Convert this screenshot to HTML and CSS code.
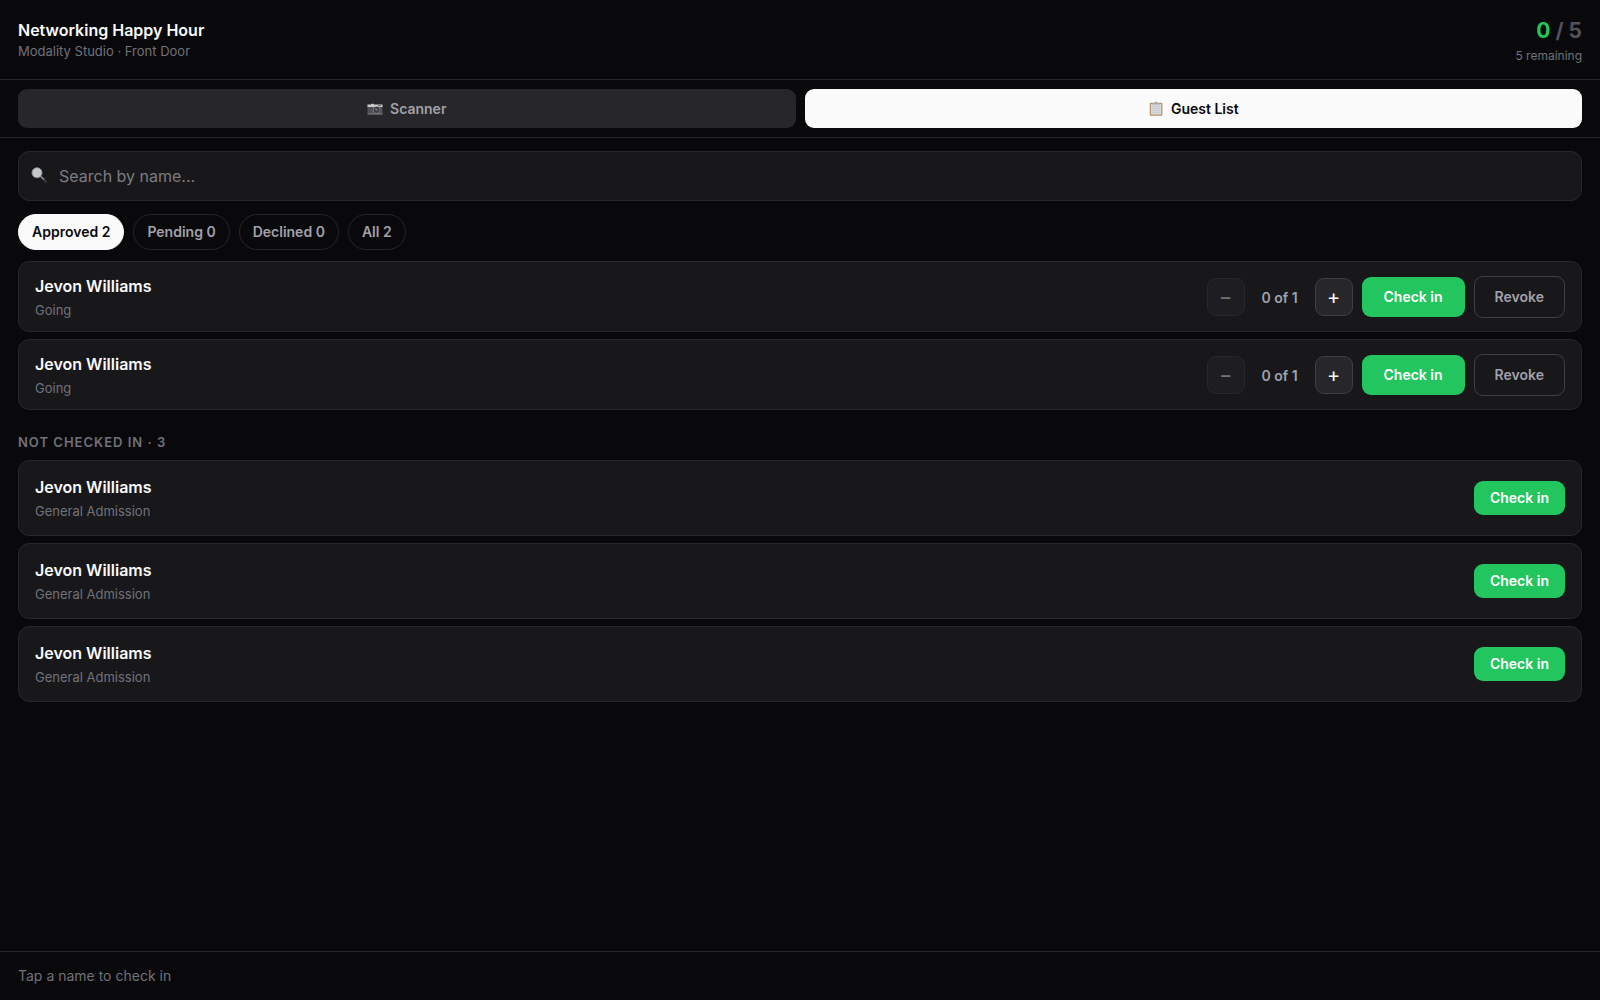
FILE: index.html
```html
<!DOCTYPE html>
<html lang="en">
<head>
    <meta charset="UTF-8">
    <meta name="viewport" content="width=device-width, initial-scale=1.0">
    <title>Networking Happy Hour - Check in</title>
    <link rel="stylesheet" href="styles.css">
</head>
<body>
    <header class="header">
        <div>
            <h1 class="event-name">Networking Happy Hour</h1>
            <p class="event-meta">Modality Studio · Front Door</p>
        </div>
        <div class="counter">
            <div class="count"><span class="count-in">0</span> / 5</div>
            <p class="count-left">5 remaining</p>
        </div>
    </header>

    <nav class="tabs">
        <button type="button" class="tab">
            <svg class="icon" viewBox="0 0 16 16" aria-hidden="true">
                <path d="M.5 4h15v9.4H.5z" fill="#505155"/>
                <path d="M.5 3.5H4l.5-.7h2l.5.7h8.5V6H.5z" fill="#c9c9c5"/>
                <path d="M.5 12.6h15v.8H.5z" fill="#8d8d8f"/>
                <path d="M11 3.6h3v1.5h-3z" fill="#7b786c"/>
                <circle cx="9.7" cy="9" r="3.7" fill="#808287"/>
                <circle cx="9.7" cy="9" r="2.9" fill="#36373c"/>
                <circle cx="9.7" cy="9" r="1.5" fill="#5a5d64"/>
                <circle cx="9" cy="8.2" r=".6" fill="#a5a8ad"/>
            </svg>
            Scanner
        </button>
        <button type="button" class="tab active">
            <svg class="icon" viewBox="0 0 16 16" aria-hidden="true">
                <rect x="1.8" y="1.8" width="12.6" height="13" rx="1" fill="#b58c5c"/>
                <path d="M2.9 2.8h10.4v10.8H2.9z" fill="#d8d9dc"/>
                <path d="M4 5.5h8M4 7.5h8M4 9.5h8M4 11.5h8" stroke="#c6c8cc" stroke-width=".7"/>
                <path d="M4.2 3.6V2.2h2.3a1.6 1.6 0 0 1 3.2 0H12v1.4z" fill="#a9abaf"/>
            </svg>
            Guest List
        </button>
    </nav>

    <main class="content">
        <label class="search">
            <svg class="icon search-icon" viewBox="0 0 16 16" aria-hidden="true">
                <path d="M10 10l5 4.7" stroke="#34373b" stroke-width="2.2" stroke-linecap="round"/>
                <path d="M9.6 9.2l3.6 3.3" stroke="#8997a3" stroke-width="1.2"/>
                <circle cx="6" cy="5.8" r="5" fill="#c6c7c9" stroke="#8b9298" stroke-width=".9"/>
            </svg>
            <input type="text" placeholder="Search by name..." aria-label="Search by name">
        </label>

        <div class="filters">
            <button type="button" class="chip active">Approved 2</button>
            <button type="button" class="chip">Pending 0</button>
            <button type="button" class="chip">Declined 0</button>
            <button type="button" class="chip">All 2</button>
        </div>

        <div class="guests">
            <div class="guest">
                <div class="guest-info">
                    <div class="guest-name">Jevon Williams</div>
                    <div class="guest-note">Going</div>
                </div>
                <div class="actions">
                    <button type="button" class="step" aria-label="Remove one" disabled>−</button>
                    <span class="party">0 of 1</span>
                    <button type="button" class="step" aria-label="Add one">+</button>
                    <button type="button" class="button large">Check in</button>
                    <button type="button" class="button outline">Revoke</button>
                </div>
            </div>
            <div class="guest">
                <div class="guest-info">
                    <div class="guest-name">Jevon Williams</div>
                    <div class="guest-note">Going</div>
                </div>
                <div class="actions">
                    <button type="button" class="step" aria-label="Remove one" disabled>−</button>
                    <span class="party">0 of 1</span>
                    <button type="button" class="step" aria-label="Add one">+</button>
                    <button type="button" class="button large">Check in</button>
                    <button type="button" class="button outline">Revoke</button>
                </div>
            </div>
        </div>

        <h2 class="section-title">Not checked in · 3</h2>

        <div class="guests">
            <div class="guest ticket">
                <div class="guest-info">
                    <div class="guest-name">Jevon Williams</div>
                    <div class="guest-note">General Admission</div>
                </div>
                <button type="button" class="button">Check in</button>
            </div>
            <div class="guest ticket">
                <div class="guest-info">
                    <div class="guest-name">Jevon Williams</div>
                    <div class="guest-note">General Admission</div>
                </div>
                <button type="button" class="button">Check in</button>
            </div>
            <div class="guest ticket">
                <div class="guest-info">
                    <div class="guest-name">Jevon Williams</div>
                    <div class="guest-note">General Admission</div>
                </div>
                <button type="button" class="button">Check in</button>
            </div>
        </div>
    </main>

    <footer class="footer">Tap a name to check in</footer>
</body>
</html>
```

FILE: styles.css
```css
:root {
    --background: #09090b;
    --card: #18181b;
    --border: #27272a;
    --border-strong: #3f3f46;
    --text: #fafafa;
    --soft: #a1a1aa;
    --muted: #71717a;
    --faint: #52525b;
    --green: #22c55e;
}

* {
    margin: 0;
    padding: 0;
    box-sizing: border-box;
}

body {
    min-height: 100vh;
    display: flex;
    flex-direction: column;
    background: var(--background);
    color: var(--text);
    font-family: Inter, sans-serif;
    font-size: 16px;
}

button,
input {
    font-family: inherit;
}

button {
    cursor: pointer;
}

.header {
    display: flex;
    justify-content: space-between;
    align-items: flex-start;
    padding: 18px 18px 14px;
    border-bottom: 1px solid var(--border);
}

.event-name {
    font-size: 16px;
    font-weight: 600;
    line-height: 24px;
}

.event-meta {
    font-size: 13px;
    line-height: 18px;
    color: var(--muted);
}

.counter {
    text-align: right;
}

.count {
    font-size: 21px;
    font-weight: 700;
    line-height: 25px;
    color: var(--faint);
}

.count-in {
    color: var(--green);
}

.count-left {
    margin-top: 4px;
    font-size: 12px;
    line-height: 18px;
    color: var(--muted);
}

.tabs {
    display: flex;
    gap: 9px;
    padding: 9px 18px;
    border-bottom: 1px solid var(--border);
}

.tab {
    flex: 1;
    display: flex;
    justify-content: center;
    align-items: center;
    gap: 7px;
    padding: 10px;
    border: none;
    border-radius: 9px;
    background: var(--border);
    color: var(--soft);
    font-size: 14px;
    font-weight: 600;
    line-height: 19px;
}

.tab.active {
    background: var(--text);
    color: var(--background);
}

.icon {
    width: 16px;
    height: 16px;
    flex: none;
}

.content {
    flex: 1;
    padding: 13px 18px;
}

.search {
    display: flex;
    align-items: center;
    gap: 12px;
    padding: 0 12px;
    background: var(--card);
    border: 1px solid var(--border);
    border-radius: 11px;
}

.search-icon {
    margin-bottom: 3px;
}

.search input {
    flex: 1;
    height: 48px;
    border: none;
    outline: none;
    background: transparent;
    color: var(--text);
    font-size: 16px;
}

.search input::placeholder {
    color: #7c7c80;
}

.filters {
    display: flex;
    gap: 9px;
    margin: 13px 0 11px;
}

.chip {
    padding: 8px 13px;
    border: 1px solid var(--border);
    border-radius: 18px;
    background: transparent;
    color: var(--soft);
    font-size: 14px;
    font-weight: 600;
    line-height: 18px;
}

.chip.active {
    background: var(--text);
    border-color: var(--text);
    color: var(--background);
}

.guests {
    display: flex;
    flex-direction: column;
    gap: 7px;
}

.guest {
    display: flex;
    justify-content: space-between;
    align-items: center;
    padding: 13px 16px 12px;
    background: var(--card);
    border: 1px solid var(--border);
    border-radius: 11px;
}

.ticket {
    padding: 15px 16px;
}

.guest-name {
    font-size: 16px;
    font-weight: 600;
    line-height: 23px;
}

.guest-note {
    margin-top: 3px;
    font-size: 13px;
    line-height: 18px;
    color: var(--muted);
}

.actions {
    display: flex;
    align-items: center;
    gap: 9px;
}

.step {
    width: 38px;
    height: 38px;
    background: var(--border);
    border: 1px solid var(--border-strong);
    border-radius: 9px;
    color: var(--text);
    font-size: 20px;
}

.step:disabled {
    opacity: 0.4;
    cursor: default;
}

.party {
    min-width: 52px;
    color: var(--soft);
    font-size: 14px;
    font-weight: 600;
    text-align: center;
}

.button {
    padding: 8px 16px;
    border: none;
    border-radius: 9px;
    background: var(--green);
    color: #ffffff;
    font-size: 14px;
    font-weight: 600;
    line-height: 18px;
}

.button.large {
    padding: 11px 22px;
}

.button.outline {
    padding: 11px 20px;
    border: 1px solid var(--border-strong);
    background: transparent;
    color: var(--soft);
}

.section-title {
    margin: 23px 0 9px;
    color: var(--muted);
    font-size: 13px;
    font-weight: 600;
    line-height: 18px;
    letter-spacing: 1px;
    text-transform: uppercase;
}

.footer {
    padding: 15px 18px;
    border-top: 1px solid var(--border);
    color: var(--muted);
    font-size: 14px;
    line-height: 18px;
}
```
